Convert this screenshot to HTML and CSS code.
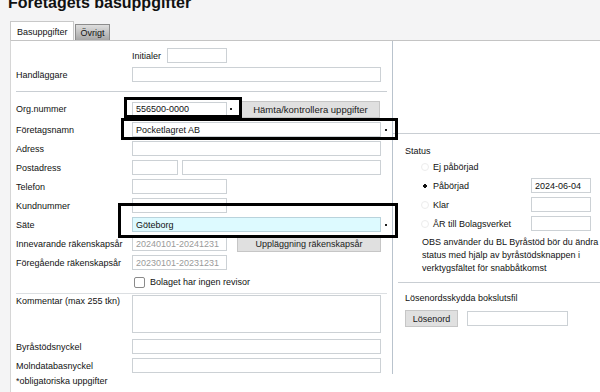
FILE: index.html
```html
<!DOCTYPE html>
<html lang="sv">
<head>
  <meta charset="UTF-8" />
  <title>Företagets basuppgifter</title>
  <link rel="stylesheet" href="styles.css">
</head>
<body>
  <div class="page">
    <h1 class="page-title">Företagets basuppgifter</h1>

    <div class="tabs">
      <span class="tab tab-active">Basuppgifter</span>
      <span class="tab tab-other">Övrigt</span>
    </div>

    <div class="panel">
      <!-- Left column: company data -->
      <div class="col-main">
        <div class="section section-top">
          <div class="row">
            <span></span>
            <div class="initials">
              <label class="initials-label">Initialer</label>
              <input class="field field-initials" type="text" />
            </div>
          </div>
          <div class="row">
            <label class="label">Handläggare</label>
            <input class="field field-wide" type="text" />
          </div>
        </div>

        <div class="section section-company">
          <div class="row row-org">
            <label class="label">Org.nummer</label>
            <div class="combo combo-org">
              <input class="field field-short" type="text" value="556500-0000" />
              <span class="combo-dot"></span>
              <span class="mark mark-org"></span>
            </div>
            <button class="btn btn-fetch">Hämta/kontrollera uppgifter</button>
          </div>
          <div class="row">
            <label class="label">Företagsnamn</label>
            <div class="combo combo-wide">
              <input class="field field-wide" type="text" value="Pocketlagret AB" />
              <span class="combo-dot"></span>
              <span class="mark mark-name"></span>
            </div>
          </div>
          <div class="row">
            <label class="label">Adress</label>
            <input class="field field-wide" type="text" />
          </div>
          <div class="row">
            <label class="label">Postadress</label>
            <div class="postal">
              <input class="field field-zip" type="text" />
              <input class="field field-city" type="text" />
            </div>
          </div>
          <div class="row">
            <label class="label">Telefon</label>
            <input class="field field-short" type="text" />
          </div>
          <div class="row">
            <label class="label">Kundnummer</label>
            <input class="field field-short" type="text" />
          </div>
          <div class="row">
            <label class="label">Säte</label>
            <div class="combo combo-wide">
              <input class="field field-wide field-focus" type="text" value="Göteborg" />
              <span class="combo-dot"></span>
              <span class="mark mark-seat"></span>
            </div>
          </div>
          <div class="row">
            <label class="label">Innevarande räkenskapsår</label>
            <div class="year">
              <input class="field field-short field-muted" type="text" value="20240101-20241231" />
              <button class="btn btn-year">Uppläggning räkenskapsår</button>
            </div>
          </div>
          <div class="row">
            <label class="label">Föregående räkenskapsår</label>
            <input class="field field-short field-muted" type="text" value="20230101-20231231" />
          </div>
          <div class="row row-check">
            <span></span>
            <label class="check"><span class="check-box"></span>Bolaget har ingen revisor</label>
          </div>
        </div>

        <div class="section section-notes">
          <div class="row row-comment">
            <label class="label">Kommentar (max 255 tkn)</label>
            <textarea class="field field-area"></textarea>
          </div>
          <div class="row">
            <label class="label">Byråstödsnyckel</label>
            <input class="field field-wide" type="text" />
          </div>
          <div class="row">
            <label class="label">Molndatabasnyckel</label>
            <input class="field field-wide" type="text" />
          </div>
          <p class="required-note">*obligatoriska uppgifter</p>
        </div>
      </div>

      <!-- Right column: status and password -->
      <div class="col-side">
        <div class="side-top"></div>

        <div class="status">
          <div class="status-title">Status</div>
          <div class="radio-row">
            <span class="radio"></span>
            <span class="radio-label">Ej påbörjad</span>
          </div>
          <div class="radio-row">
            <span class="radio radio-on"></span>
            <span class="radio-label">Påbörjad</span>
            <input class="field field-date" type="text" value="2024-06-04" />
          </div>
          <div class="radio-row">
            <span class="radio"></span>
            <span class="radio-label">Klar</span>
            <input class="field field-date" type="text" />
          </div>
          <div class="radio-row">
            <span class="radio"></span>
            <span class="radio-label">ÅR till Bolagsverket</span>
            <input class="field field-date" type="text" />
          </div>
          <p class="status-note">OBS använder du BL Byråstöd bör du ändra<br>status med hjälp av byråstödsknappen i<br>verktygsfältet för snabbåtkomst</p>
        </div>

        <div class="password">
          <div class="password-title">Lösenordsskydda bokslutsfil</div>
          <div class="password-row">
            <button class="btn btn-password">Lösenord</button>
            <input class="field field-password" type="text" />
          </div>
        </div>
      </div>
    </div>
  </div>
</body>
</html>
```

FILE: styles.css
```css
:root {
  --text: #111;
  --muted: #9a9a9a;
  --line: #c9ced3;
  --field-border: #ccd1d5;
  --btn-bg: #e0e0e0;
  --btn-border: #c6c6c6;
  --page-bg: #f4f4f5;
}

* {
  box-sizing: border-box;
}

html, body {
  margin: 0;
  background: var(--page-bg);
}

body {
  font-family: "Liberation Sans", Arial, sans-serif;
  font-size: 9px;
  color: var(--text);
  overflow: hidden;
}

.page {
  display: flow-root;
  width: 600px;
  height: 392px;
}

.page-title {
  margin: -6px 0 0 8px;
  height: 18px;
  font-size: 16px;
  line-height: 18px;
  font-weight: bold;
  color: #111;
}

/* Tabs */
.tabs {
  display: flex;
  align-items: flex-end;
  height: 19px;
  margin-top: 9px;
  padding-left: 10px;
}

.tab {
  display: flex;
  align-items: center;
  border: 1px solid #c8c8c8;
  border-bottom: none;
  padding: 0 5px;
}

.tab-active {
  height: 19px;
  background: #fff;
  padding: 1px 5px 0 6px;
}

.tab-other {
  height: 16px;
  margin-left: 1px;
  padding: 1px 4px 0 5px;
  border-color: #8c8c8c;
  background: linear-gradient(#dedede, #a6a6a6);
}

/* Panel */
.panel {
  display: flex;
  align-items: flex-start;
  margin-left: 10px;
  height: 352px;
  border-top: 1px solid #c4c4c4;
  border-left: 1px solid #d6d6d6;
  background: #fff;
}

.col-main {
  width: 381px;
  flex: none;
  padding-left: 5px;
}

.section {
  margin-right: 5px;
}

.section-top {
  padding: 5px 0 7px;
  border-bottom: 1px solid var(--line);
}

.section-company {
  padding: 6px 0 1px;
  border-bottom: 1px solid #dcdfe2;
}

.section-notes {
  padding-top: 1px;
}

.row {
  display: grid;
  grid-template-columns: 116px auto;
  align-items: center;
  height: 19px;
}

.row-org {
  grid-template-columns: 116px 109px auto;
  height: 22px;
}

.row-check {
  height: 20px;
}

.row-comment {
  align-items: start;
  height: 38px;
  margin-bottom: 4px;
}

.row-comment .label {
  line-height: 12px;
}

.label {
  white-space: nowrap;
}

/* Fields */
.field {
  display: block;
  height: 15px;
  margin: 0;
  padding: 0 3px;
  border: 1px solid var(--field-border);
  background: #fff;
  font-family: inherit;
  font-size: 9px;
  color: var(--text);
  outline: none;
}

.field-wide { width: 249px; }
.field-short { width: 95px; }
.field-zip { width: 46px; }
.field-city { width: 199px; }
.field-initials { width: 60px; }
.field-date { width: 60px; }
.field-password { width: 101px; }

.field-area {
  width: 249px;
  height: 38px;
  resize: none;
}

.field-focus {
  background: #ddfaff;
  border-color: #b9d3dc;
}

.field-muted {
  color: var(--muted);
}

.initials {
  display: flex;
  align-items: center;
  gap: 6px;
  margin-left: 0;
}

.postal {
  display: flex;
  gap: 4px;
}

.year {
  display: flex;
  align-items: center;
  gap: 10px;
}

/* Combo with dropdown marker */
.combo {
  position: relative;
  display: flex;
  align-items: center;
  height: 100%;
}

.combo-dot {
  width: 2px;
  height: 2px;
  background: #222;
}

.combo-org .combo-dot {
  margin-left: 3px;
}

.combo-wide .combo-dot {
  margin-left: 4px;
}

/* Highlight frames drawn over the form */
.mark {
  position: absolute;
  border: 3px solid #000;
  pointer-events: none;
}

.mark-org {
  left: -8px;
  top: -1px;
  width: 118px;
  height: 21px;
}

.mark-name {
  left: -11px;
  top: -2px;
  width: 277px;
  height: 22px;
}

.mark-seat {
  left: -14px;
  top: -12px;
  width: 280px;
  height: 35px;
}

/* Buttons */
.btn {
  height: 17px;
  margin: 0;
  padding: 0 6px;
  border: 1px solid var(--btn-border);
  background: var(--btn-bg);
  font-family: inherit;
  font-size: 9px;
  color: #1a1a1a;
  cursor: pointer;
}

.btn-fetch {
  width: 139px;
  font-size: 9.5px;
}

.btn-year {
  width: 144px;
}

.btn-password {
  width: 53px;
  padding: 0;
}

/* Checkbox */
.check {
  display: flex;
  align-items: center;
  gap: 5px;
  margin-left: 2px;
}

.check-box {
  width: 11px;
  height: 11px;
  border: 1px solid #8a8a8a;
  border-radius: 2px;
  background: #fff;
}

.required-note {
  margin: 0;
  line-height: 12px;
}

/* Right column */
.col-side {
  flex: 1;
  height: 333px;
  border-left: 1px solid #b9c3cd;
}

.side-top {
  height: 93px;
  border-bottom: 1px solid var(--line);
}

.status {
  padding: 11px 0 0 12px;
}

.status-title {
  line-height: 12px;
}

.radio-row {
  display: grid;
  grid-template-columns: 8px 94px 60px;
  column-gap: 4px;
  align-items: center;
  height: 19px;
  padding-left: 16px;
}

.radio {
  width: 8px;
  height: 8px;
  border: 1px solid #ececec;
  border-radius: 50%;
}

.radio-on {
  border-color: transparent;
  background: radial-gradient(circle, #111 0 1.6px, transparent 2px);
}

.status-note {
  margin: 3px 0 0 17px;
  line-height: 13px;
  white-space: nowrap;
}

.password {
  margin: 7px 0 0 5px;
  padding: 9px 0 0 7px;
  border-top: 1px solid var(--line);
}

.password-title {
  line-height: 12px;
}

.password-row {
  display: flex;
  align-items: center;
  gap: 9px;
  margin-top: 6px;
}
```
